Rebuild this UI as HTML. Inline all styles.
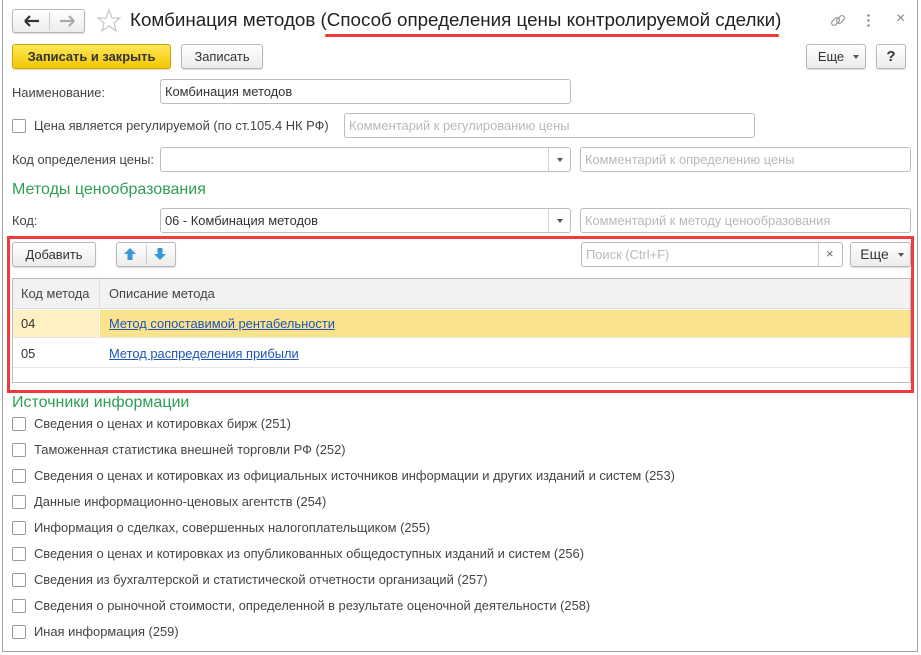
<!DOCTYPE html>
<html><head><meta charset="utf-8"><style>
*{box-sizing:border-box;margin:0;padding:0}
body{width:921px;height:655px;background:#fff;font-family:"Liberation Sans",Arial,sans-serif;font-size:12.9px;color:#333;position:relative;overflow:hidden}
.a{position:absolute}
.win{left:2px;top:0;width:916px;height:652px;border:1px solid #a0a0a0;border-top:none}
.btn{position:absolute;border:1px solid #b8b8b8;border-radius:3px;background:linear-gradient(#fff,#ececec);box-shadow:0 1px 1px rgba(0,0,0,.15);text-align:center;color:#333}
.inp{position:absolute;border:1px solid #bdbdbd;border-radius:3px;background:#fff;padding-left:4px;color:#333}
.ph{color:#b9b9b9}
.cb{position:absolute;width:14px;height:14px;border:1px solid #9a9a9a;border-radius:2px;background:#fff}
.lbl{position:absolute;color:#444}
.grn{position:absolute;color:#2e9e55;font-size:16px}
.dd{position:absolute;right:0;top:0;width:22px;height:100%;border-left:1px solid #d0d0d0}
.dd:after{content:"";position:absolute;left:8px;top:10px;border:3px solid transparent;border-top:4px solid #555}
a{color:#1f55b8;text-decoration:underline}
</style></head><body>
<div class="a win"></div>
<!-- title -->
<div class="btn" style="left:12px;top:9px;width:73px;height:24px"></div>
<div class="a" style="left:49px;top:12px;width:1px;height:18px;background:#ccc"></div>
<svg class="a" style="left:24px;top:14px" width="16" height="14" viewBox="0 0 16 14"><path d="M1 7H15M1 7L6 2M1 7L6 12" fill="none" stroke="#333" stroke-width="2.2"/></svg>
<svg class="a" style="left:59px;top:14px" width="16" height="14" viewBox="0 0 16 14"><path d="M15 7H1M15 7L10 2M15 7L10 12" fill="none" stroke="#aaa" stroke-width="2.2"/></svg>
<svg class="a" style="left:96px;top:8px" width="26" height="26" viewBox="0 0 26 26"><polygon points="13,2 16,10 24,10 18,15 20,23 13,18 6,23 8,15 2,10 10,10" fill="none" stroke="#c8c8c8" stroke-width="1.2"/></svg>
<div class="a" style="left:130px;top:9px;font-size:18.8px;color:#222;white-space:nowrap">Комбинация методов (Способ определения цены контролируемой сделки)</div>
<div class="a" style="left:325px;top:34px;width:454px;height:3px;background:#ef3b3b;border-radius:2px"></div>
<svg class="a" style="left:829px;top:12px" width="18" height="18" viewBox="0 0 18 18"><g fill="none" stroke="#999" stroke-width="1.2"><rect x="2" y="7" width="9" height="5" rx="2.5" transform="rotate(-45 6.5 9.5)"/><rect x="7" y="5" width="9" height="5" rx="2.5" transform="rotate(-45 11.5 7.5)"/></g></svg>
<div class="a" style="left:867px;top:13px;width:3px;height:15px;background:radial-gradient(circle,#999 1.2px,transparent 1.5px) 0 0/3px 5px"></div>
<div class="a" style="left:896px;top:10px;font-size:16px;color:#888">×</div>
<!-- buttons -->
<div class="btn" style="left:12px;top:44px;width:159px;height:25px;background:linear-gradient(#ffe65a,#f2c800);border-color:#c9a600;font-weight:bold;line-height:23px;color:#333">Записать и закрыть</div>
<div class="btn" style="left:181px;top:44px;width:82px;height:25px;line-height:23px">Записать</div>
<div class="btn" style="left:806px;top:44px;width:60px;height:25px;line-height:23px;padding-right:10px">Еще</div>
<div class="a" style="left:853px;top:55px;border:3px solid transparent;border-top:4px solid #555"></div>
<div class="btn" style="left:876px;top:44px;width:30px;height:25px;line-height:23px;font-weight:bold;font-size:15px">?</div>
<!-- fields -->
<div class="lbl" style="left:12px;top:85px">Наименование:</div>
<div class="inp" style="left:160px;top:79px;width:411px;height:25px;line-height:23px">Комбинация методов</div>
<div class="cb" style="left:12px;top:119px"></div>
<div class="lbl" style="left:34px;top:118px">Цена является регулируемой (по ст.105.4 НК РФ)</div>
<div class="inp ph" style="left:344px;top:113px;width:411px;height:25px;line-height:23px">Комментарий к регулированию цены</div>
<div class="lbl" style="left:12px;top:152px">Код определения цены:</div>
<div class="inp" style="left:160px;top:147px;width:411px;height:25px"><div class="dd"></div></div>
<div class="inp ph" style="left:580px;top:147px;width:331px;height:25px;line-height:23px">Комментарий к определению цены</div>
<div class="grn" style="left:12px;top:181px">Методы ценообразования</div>
<div class="lbl" style="left:12px;top:213px">Код:</div>
<div class="inp" style="left:160px;top:208px;width:411px;height:25px;line-height:23px">06 - Комбинация методов<div class="dd"></div></div>
<div class="inp ph" style="left:580px;top:208px;width:331px;height:25px;line-height:23px">Комментарий к методу ценообразования</div>
<!-- red box -->
<div class="a" style="left:7px;top:236px;width:907px;height:157px;border:3px solid #ef3b3b"></div>
<div class="btn" style="left:12px;top:242px;width:84px;height:25px;line-height:23px">Добавить</div>
<div class="btn" style="left:116px;top:242px;width:60px;height:25px"></div>
<div class="a" style="left:146px;top:245px;width:1px;height:19px;background:#ccc"></div>
<svg class="a" style="left:123px;top:247px" width="14" height="14" viewBox="0 0 14 14"><path d="M7 1L13 7H9.5V13H4.5V7H1Z" fill="#3a98d8"/></svg>
<svg class="a" style="left:153px;top:247px" width="14" height="14" viewBox="0 0 14 14"><path d="M7 13L13 7H9.5V1H4.5V7H1Z" fill="#3a98d8"/></svg>
<div class="inp ph" style="left:581px;top:242px;width:262px;height:25px;line-height:23px">Поиск (Ctrl+F)</div>
<div class="a" style="left:818px;top:243px;width:1px;height:23px;background:#ccc"></div>
<div class="a" style="left:826px;top:246px;color:#666;font-size:13px">×</div>
<div class="btn" style="left:850px;top:242px;width:61px;height:25px;line-height:23px;padding-right:12px;font-size:14px">Еще</div>
<div class="a" style="left:898px;top:253px;border:3px solid transparent;border-top:4px solid #555"></div>
<div class="a" style="left:12px;top:278px;width:899px;height:105px;border:1px solid #bdbdbd">
 <div class="a" style="left:0;top:0;width:897px;height:30px;background:#f2f2f2;border-bottom:1px solid #ddd"></div>
 <div class="a" style="left:86px;top:0;width:1px;height:30px;background:#ddd"></div>
 <div class="a" style="left:8px;top:7px;color:#444">Код метода</div>
 <div class="a" style="left:96px;top:7px;color:#444">Описание метода</div>
 <div class="a" style="left:0;top:31px;width:86px;height:27px;background:#fdf0c2"></div>
 <div class="a" style="left:87px;top:31px;width:810px;height:27px;background:#fbe38e"></div>
 <div class="a" style="left:8px;top:37px;color:#333">04</div>
 <div class="a" style="left:96px;top:37px"><a>Метод сопоставимой рентабельности</a></div>
 <div class="a" style="left:0;top:58px;width:897px;height:1px;background:#e5e5e5"></div>
 <div class="a" style="left:8px;top:67px;color:#333">05</div>
 <div class="a" style="left:96px;top:67px"><a>Метод распределения прибыли</a></div>
 <div class="a" style="left:0;top:88px;width:897px;height:1px;background:#e5e5e5"></div>
</div>
<div class="grn" style="left:12px;top:394px">Источники информации</div>
<div class="cb" style="left:12px;top:417px"></div><div class="lbl" style="left:34px;top:416px">Сведения о ценах и котировках бирж (251)</div>
<div class="cb" style="left:12px;top:443px"></div><div class="lbl" style="left:34px;top:442px">Таможенная статистика внешней торговли РФ (252)</div>
<div class="cb" style="left:12px;top:469px"></div><div class="lbl" style="left:34px;top:468px">Сведения о ценах и котировках из официальных источников информации и других изданий и систем (253)</div>
<div class="cb" style="left:12px;top:495px"></div><div class="lbl" style="left:34px;top:494px">Данные информационно-ценовых агентств (254)</div>
<div class="cb" style="left:12px;top:521px"></div><div class="lbl" style="left:34px;top:520px">Информация о сделках, совершенных налогоплательщиком (255)</div>
<div class="cb" style="left:12px;top:547px"></div><div class="lbl" style="left:34px;top:546px">Сведения о ценах и котировках из опубликованных общедоступных изданий и систем (256)</div>
<div class="cb" style="left:12px;top:573px"></div><div class="lbl" style="left:34px;top:572px">Сведения из бухгалтерской и статистической отчетности организаций (257)</div>
<div class="cb" style="left:12px;top:599px"></div><div class="lbl" style="left:34px;top:598px">Сведения о рыночной стоимости, определенной в результате оценочной деятельности (258)</div>
<div class="cb" style="left:12px;top:625px"></div><div class="lbl" style="left:34px;top:624px">Иная информация (259)</div>
</body></html>
